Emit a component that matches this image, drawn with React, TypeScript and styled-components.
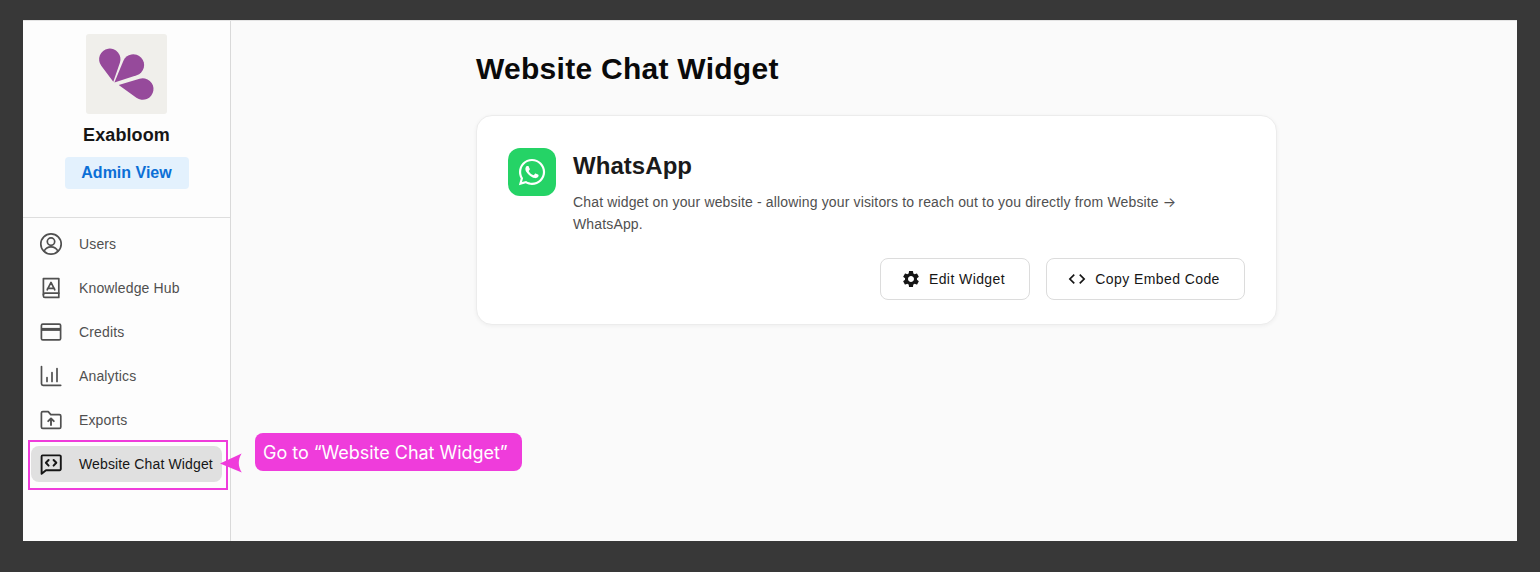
import React from "react";
import styled, { createGlobalStyle } from "styled-components";
import { FaWhatsapp } from "react-icons/fa";
import { MdSettings, MdCode } from "react-icons/md";

const Global = createGlobalStyle`
  html, body { margin: 0; padding: 0; background: #383838; }
  body { font-family: "Liberation Sans", Arial, sans-serif; }
  * { box-sizing: border-box; }
`;

const Page = styled.div`
  width: 1540px;
  height: 572px;
  padding: 20px 23px 31px;
  overflow: hidden;
`;
const Frame = styled.div`
  position: relative;
  display: flex;
  height: 521px;
  background: #fafafa;
  border-top: 1px solid #e4e4e4;
`;
const Sidebar = styled.aside`
  width: 208px;
  flex: none;
  background: #fdfdfd;
  border-right: 1px solid #d9d9d9;
  display: flex;
  flex-direction: column;
`;
const Brand = styled.div`
  height: 197px;
  padding-top: 13px;
  display: flex;
  flex-direction: column;
  align-items: center;
  border-bottom: 1px solid #dedede;
`;
const LogoTile = styled.div`
  width: 81px;
  height: 80px;
  border-radius: 3px;
  background: #f0efeb;
`;
const BrandName = styled.div`
  margin-top: 10px;
  font-size: 18px;
  line-height: 22px;
  font-weight: 700;
  letter-spacing: 0.1px;
  color: #161616;
`;
const RoleBadge = styled.div`
  margin-top: 11px;
  width: 124px;
  height: 32px;
  border-radius: 4px;
  background: #e3f1fd;
  color: #0b6fd6;
  font-size: 16px;
  font-weight: 700;
  display: flex;
  align-items: center;
  justify-content: center;
`;
const Nav = styled.nav`
  padding: 8px 8px 0;
  display: flex;
  flex-direction: column;
  gap: 8px;
`;
const NavItem = styled.div<{ $active?: boolean }>`
  height: 36px;
  width: 191px;
  padding-left: 8px;
  display: flex;
  align-items: center;
  gap: 16px;
  border-radius: 8px;
  font-size: 14px;
  letter-spacing: 0.14px;
  color: ${(p) => (p.$active ? "#161616" : "#505050")};
  background: ${(p) => (p.$active ? "#e0e0e0" : "transparent")};
  svg { flex: none; }
`;
const Main = styled.main`
  flex: 1;
  padding: 28px 0 0 245px;
`;
const Title = styled.h1`
  margin: 0;
  font-size: 30px;
  line-height: 40px;
  font-weight: 700;
  letter-spacing: 0.27px;
  color: #0a0a0a;
`;
const Card = styled.section`
  margin-top: 26px;
  width: 801px;
  height: 210px;
  padding: 32px 31px 0;
  background: #fff;
  border: 1px solid #ececec;
  border-radius: 16px;
  box-shadow: 0 1px 4px rgba(0, 0, 0, 0.05);
`;
const CardTop = styled.div`
  display: flex;
  gap: 17px;
`;
const AppIcon = styled.div`
  width: 48px;
  height: 48px;
  flex: none;
  border-radius: 12px;
  background: #25d366;
  color: #fff;
  display: flex;
  align-items: center;
  justify-content: center;
`;
const AppBody = styled.div`
  flex: 1;
`;
const AppName = styled.h2`
  margin: 0;
  font-size: 24px;
  line-height: 36px;
  font-weight: 700;
  letter-spacing: 0.05px;
  color: #1a1a1a;
`;
const AppText = styled.p`
  margin: 7px 0 0;
  max-width: 620px;
  font-size: 14px;
  line-height: 22px;
  letter-spacing: 0.15px;
  color: #505050;
`;
const Arrow = styled.span`
  font-family: Inter, sans-serif;
  letter-spacing: 0;
`;
const Actions = styled.div`
  margin-top: 23px;
  display: flex;
  justify-content: flex-end;
  gap: 16px;
`;
const ActionButton = styled.button<{ $w: number }>`
  width: ${(p) => p.$w}px;
  height: 42px;
  padding: 0 4px 0 0;
  display: flex;
  align-items: center;
  justify-content: center;
  gap: 8px;
  background: #fff;
  border: 1px solid #dcdcdc;
  border-radius: 8px;
  font-family: inherit;
  font-size: 14px;
  letter-spacing: 0.42px;
  color: #161616;
`;
const Highlight = styled.div`
  position: absolute;
  left: 5px;
  top: 419px;
  width: 200px;
  height: 50px;
  border: 2px solid #ef3cdb;
`;
const Callout = styled.div`
  position: absolute;
  left: 232px;
  top: 412px;
  width: 267px;
  height: 38px;
  padding-left: 8px;
  display: flex;
  align-items: center;
  border-radius: 8px;
  background: #ef3cdb;
  color: #fff;
  font-family: Inter, sans-serif;
  font-size: 18px;
  font-weight: 400;
  letter-spacing: -0.03px;
  white-space: nowrap;
`;
const Pointer = styled.svg`
  position: absolute;
  left: 197px;
  top: 430px;
`;

function petal(tx: number, ty: number, cx: number, cy: number, r: number) {
  const dx = cx - tx;
  const dy = cy - ty;
  const d = Math.hypot(dx, dy);
  const a = Math.atan2(dy, dx);
  const b = Math.asin(r / d);
  const l = Math.sqrt(d * d - r * r);
  const p1 = [tx + l * Math.cos(a + b), ty + l * Math.sin(a + b)];
  const p2 = [tx + l * Math.cos(a - b), ty + l * Math.sin(a - b)];
  return `M${tx} ${ty}L${p1[0].toFixed(2)} ${p1[1].toFixed(2)}A${r} ${r} 0 1 0 ${p2[0].toFixed(2)} ${p2[1].toFixed(2)}Z`;
}

const Logo = () => (
  <svg width="81" height="80" viewBox="0 0 81 80" fill="#964a9b">
    <path d={petal(27.3, 47.7, 23.8, 25.3, 10.7)} />
    <path d={petal(28.4, 48.6, 47.3, 31, 10.8)} />
    <path d={petal(32.7, 51, 56.7, 55, 10.8)} />
  </svg>
);

const Stroke = ({ children }: { children: React.ReactNode }) => (
  <svg width="24" height="24" viewBox="0 0 24 24" fill="none" stroke="currentColor" strokeWidth="1.7" strokeLinecap="round" strokeLinejoin="round">
    {children}
  </svg>
);

const UsersIcon = () => (
  <Stroke>
    <circle cx="12" cy="12" r="10.2" />
    <circle cx="12" cy="9.6" r="3.7" />
    <path d="M5.2 19c1.4-3 4-4.2 6.8-4.2s5.4 1.2 6.8 4.2" />
  </Stroke>
);
const BookIcon = () => (
  <Stroke>
    <path d="M4.4 2.6h15.4v18.8H5.9a1.5 1.5 0 0 1-1.5-1.5V2.6z" />
    <path d="M4.4 18.6c0-1 .7-1.4 1.5-1.4h13.9" />
    <path d="M8.2 13.8 12 6.4l3.8 7.4M8.6 12.4h6.8" />
  </Stroke>
);
const CardIcon = () => (
  <Stroke>
    <rect x="2.4" y="4.2" width="19.2" height="15.6" rx="1.4" />
    <path d="M2.6 9.4h18.8" strokeWidth="3" strokeLinecap="butt" />
  </Stroke>
);
const ChartIcon = () => (
  <Stroke>
    <path d="M2.5 2.5v17.2a1.6 1.6 0 0 0 1.6 1.6h17.6" />
    <path d="M8 17.5v-4M13 17.5V8.5M18 17.5V4.5" />
  </Stroke>
);
const FolderIcon = () => (
  <Stroke>
    <path d="M2.4 5a1.4 1.4 0 0 1 1.4-1.4h5.4l2.6 3h8.6a1.4 1.4 0 0 1 1.4 1.4v11a1.4 1.4 0 0 1-1.4 1.4H3.8A1.4 1.4 0 0 1 2.4 19V5z" />
    <path d="M12 17v-6.4M9.2 13.2 12 10.4l2.8 2.8" strokeWidth="1.9" />
  </Stroke>
);
const ChatCodeIcon = () => (
  <Stroke>
    <path d="M3.6 3.4h17a1.2 1.2 0 0 1 1.2 1.2V17a1.2 1.2 0 0 1-1.2 1.2H7l-4.4 3.6V4.4a1 1 0 0 1 1-1z" strokeWidth="1.9" />
    <path d="M9.6 8 6.9 10.8l2.7 2.8M14.6 8l2.7 2.8-2.7 2.8" strokeWidth="2" />
  </Stroke>
);

const items = [
  { label: "Users", Icon: UsersIcon },
  { label: "Knowledge Hub", Icon: BookIcon },
  { label: "Credits", Icon: CardIcon },
  { label: "Analytics", Icon: ChartIcon },
  { label: "Exports", Icon: FolderIcon },
  { label: "Website Chat Widget", Icon: ChatCodeIcon, active: true },
];

export default function App() {
  return (
    <Page>
      <Global />
      <Frame>
        <Sidebar>
          <Brand>
            <LogoTile>
              <Logo />
            </LogoTile>
            <BrandName>Exabloom</BrandName>
            <RoleBadge>Admin View</RoleBadge>
          </Brand>
          <Nav>
            {items.map(({ label, Icon, active }) => (
              <NavItem key={label} $active={active}>
                <Icon />
                {label}
              </NavItem>
            ))}
          </Nav>
        </Sidebar>
        <Main>
          <Title>Website Chat Widget</Title>
          <Card>
            <CardTop>
              <AppIcon>
                <FaWhatsapp size={30} />
              </AppIcon>
              <AppBody>
                <AppName>WhatsApp</AppName>
                <AppText>
                  Chat widget on your website - allowing your visitors to reach out to you directly from Website <Arrow>→</Arrow> WhatsApp.
                </AppText>
              </AppBody>
            </CardTop>
            <Actions>
              <ActionButton $w={150}>
                <MdSettings size={20} />
                Edit Widget
              </ActionButton>
              <ActionButton $w={199}>
                <MdCode size={20} />
                Copy Embed Code
              </ActionButton>
            </Actions>
          </Card>
        </Main>
        <Highlight />
        <Pointer width="26" height="24" viewBox="0 0 26 24">
          <path d="M0 12.5 21.6 2.6C19.6 6 18.8 9 18.8 12c0 3.4 1 6.4 3 9.4z" fill="#ef3cdb" />
        </Pointer>
        <Callout>Go to “Website Chat Widget”</Callout>
      </Frame>
    </Page>
  );
}
